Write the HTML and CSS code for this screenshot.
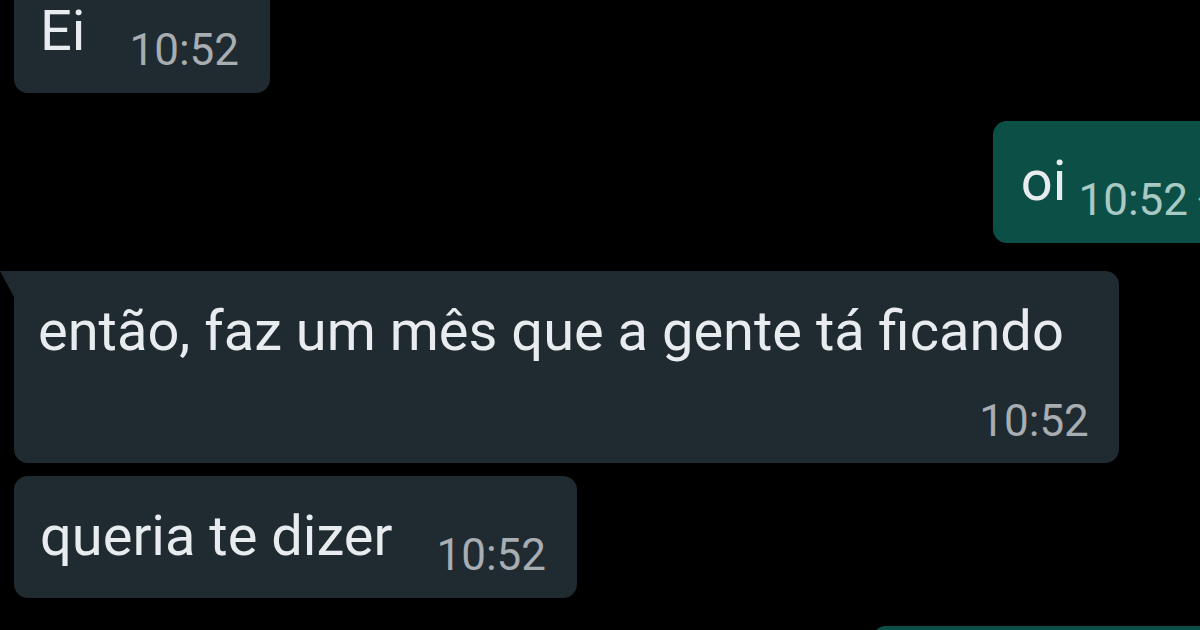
FILE: index.html
```html
<!DOCTYPE html>
<html lang="pt-BR">
<head>
<meta charset="utf-8">
<title>Conversa</title>
<link rel="stylesheet" href="styles.css">
</head>
<body>
<main class="chat">
  <div class="bubble in first">
    <span class="text">Ei</span>
    <span class="time">10:52</span>
  </div>
  <div class="bubble out">
    <span class="text">oi</span>
    <span class="time">10:52</span>
    <svg class="ticks" width="40" height="24" viewBox="0 0 40 24" aria-hidden="true">
      <path d="M2 13l6 6L22 4" fill="none" stroke="#53bdeb" stroke-width="3" stroke-linecap="round" stroke-linejoin="round"/>
      <path d="M16 17l2 2L33 4" fill="none" stroke="#53bdeb" stroke-width="3" stroke-linecap="round" stroke-linejoin="round"/>
    </svg>
  </div>
  <div class="bubble in stacked tail">
    <span class="text">então, faz um mês que a gente tá ficando</span>
    <span class="time">10:52</span>
  </div>
  <div class="bubble in grouped">
    <span class="text">queria te dizer</span>
    <span class="time">10:52</span>
  </div>
  <div class="bubble out next"></div>
</main>
</body>
</html>
```

FILE: styles.css
```css
html, body {
  margin: 0;
  padding: 0;
  background: #000;
  width: 1200px;
  height: 630px;
  overflow: hidden;
}

.chat {
  display: flex;
  flex-direction: column;
  gap: 28px;
  margin-top: -29px;
  font-family: Roboto, "Noto Sans", "Liberation Sans", sans-serif;
}

.bubble {
  position: relative;
  display: flex;
  align-items: flex-end;
  gap: 44px;
  padding: 27px 31px 21px 26px;
  border-radius: 14px;
  box-sizing: border-box;
}

.bubble.in {
  align-self: flex-start;
  margin-left: 14px;
  background: #1f2a31;
}

.bubble.out {
  align-self: flex-end;
  margin-right: -76px;
  background: #0c4f47;
  gap: 12px;
  padding-left: 28px;
  padding-right: 38px;
}

.text {
  font-size: 56px;
  line-height: 66px;
  color: #e8ecee;
  margin-bottom: 8px;
  white-space: nowrap;
}

.time {
  font-size: 44px;
  line-height: 44px;
  color: #a7adb1;
  white-space: nowrap;
}

.out .time {
  color: #a9c9c3;
}

.ticks {
  margin-left: -2px;
  margin-bottom: 12px;
}

.bubble.stacked {
  flex-direction: column;
  align-items: stretch;
  gap: 35px;
  padding: 27px 55px 20px 24px;
}

.stacked .text {
  margin-bottom: 0;
}

.stacked .time {
  align-self: flex-end;
  margin-right: -25px;
}

.bubble.tail {
  border-top-left-radius: 0;
}

.bubble.tail::before {
  content: "";
  position: absolute;
  top: 0;
  left: -14px;
  width: 0;
  height: 0;
  border-top: 26px solid #1f2a31;
  border-left: 14px solid transparent;
}

.bubble.grouped {
  margin-top: -15px;
}

.bubble.next {
  width: 404px;
  height: 120px;
}
```
